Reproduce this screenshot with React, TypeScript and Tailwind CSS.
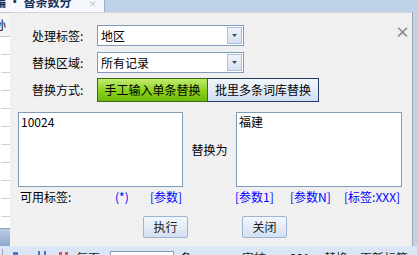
const font = "font-['Noto_Sans_CJK_SC','Noto_Sans',sans-serif]";

function Combo({ value }: { value: string }) {
  return (
    <div className="flex h-[21px] w-[147px] border border-[#7f9db9] bg-white">
      <div className="flex-1 pl-[3px] text-[12px] leading-[19px] text-black">{value}</div>
      <div className="m-px flex w-[15px] items-center justify-center border border-[#aabfe0] bg-linear-to-b from-[#eef3fb] to-[#d5e1f2]">
        <svg width="5" height="3" viewBox="0 0 5 3">
          <path d="M0 0h5L2.5 3z" fill="#4a4a4a" />
        </svg>
      </div>
    </div>
  );
}

function Btn({ label }: { label: string }) {
  return (
    <div className="flex h-[22px] w-[45px] items-center justify-center rounded-[2px] border border-[#9fb4d2] bg-linear-to-b from-[#f3f7fc] to-[#d4e0f1] text-[12px] text-[#1b1b1b]">
      {label}
    </div>
  );
}

export default function App() {
  const rows = Array.from({ length: 10 });
  return (
    <div className={`flex h-[255px] w-[417px] flex-col overflow-hidden bg-[#c0d2ea] ${font}`}>
      {/* 背景标签栏 */}
      <div className="flex h-[12px] shrink-0">
        <div className="relative flex w-[105px] items-end overflow-hidden border-r border-[#9fb3d0] bg-[#f5f8fd]">
          <span className="mb-[4px] ml-[-6px] whitespace-nowrap text-[12px] font-bold leading-[12px] text-[#1c2f55]">
            编 · 替条数分
          </span>
          <span className="absolute left-[88px] top-[-3px] text-[9px] text-[#b5b5b5]">×</span>
        </div>
        <div className="flex-1" />
      </div>

      <div className="flex h-[234px] shrink-0">
        {/* 左侧表格 */}
        <div className="flex w-[10px] flex-col overflow-hidden border-t border-[#c4c4c4] bg-white">
          <div className="h-[24px] shrink-0 overflow-hidden border-b border-[#c9c9c9] bg-[#f4f4f4] pt-[5px]">
            <span className="ml-[-6px] block whitespace-nowrap text-[12px] leading-[14px] text-black">孙</span>
          </div>
          {rows.map((_, i) => (
            <div key={i} className="ml-[1px] h-[18px] shrink-0 border-b border-[#cfcfcf]" />
          ))}
          <div className="h-[11px] shrink-0" />
          <div className="flex-1 border-t border-[#8aa2c4] bg-linear-to-b from-[#b9cbe4] to-[#8fa9cd]" />
        </div>

        {/* 对话框 */}
        <div className="flex w-[403px] flex-col border-r border-t border-r-[#a3a3a3] border-t-[#d4d4d4] bg-[#f0f0f0] text-[12px] text-black">
          <div className="mt-[12px] flex items-start">
            <div className="ml-[22px] w-[65px] leading-[21px]">处理标签:</div>
            <Combo value="地区" />
            <div className="ml-[151px] mt-[1px] text-[15px] font-bold leading-[12px] text-[#8c8c8c]">×</div>
          </div>
          <div className="mt-[6px] flex">
            <div className="ml-[22px] w-[65px] leading-[21px]">替换区域:</div>
            <Combo value="所有记录" />
          </div>
          <div className="mt-[5px] flex">
            <div className="ml-[22px] w-[65px] leading-[24px]">替换方式:</div>
            <div className="flex h-[24px] w-[111px] items-center justify-center border border-[#3b6b12] bg-linear-to-b from-[#c2ec6c] via-[#8fd41c] to-[#6cb80b] text-black">
              手工输入单条替换
            </div>
            <div className="flex h-[24px] w-[111px] items-center justify-center border border-l-0 border-[#213d63] bg-linear-to-b from-[#f2f6fc] to-[#d2dff1] text-black">
              批里多条词库替换
            </div>
          </div>

          <div className="mt-[10px] flex items-center">
            <div className="ml-[8px] h-[75px] w-[165px] border border-[#7f9db9] bg-white pl-[2px] pt-[1px] leading-[16px]">
              10024
            </div>
            <div className="w-[53px] text-center">替换为</div>
            <div className="h-[75px] w-[166px] border border-[#7f9db9] bg-white pl-[2px] pt-[1px] leading-[16px]">
              福建
            </div>
          </div>

          <div className="mt-[2px] flex leading-[16px]">
            <div className="ml-[10px] w-[95px]">可用标签:</div>
            <div className="w-[35px] text-[#0000ff]">(*)</div>
            <div className="w-[85px] text-[#0000ff]">[参数]</div>
            <div className="w-[55px] text-[#0000ff]">[参数1]</div>
            <div className="w-[54px] text-[#0000ff]">[参数N]</div>
            <div className="text-[#0000ff]">[标签:XXX]</div>
          </div>

          <div className="ml-[133px] mt-[11px] flex gap-[54px]">
            <Btn label="执行" />
            <Btn label="关闭" />
          </div>
        </div>
        <div className="flex-1" />
      </div>

      {/* 底部工具栏 */}
      <div className="flex h-[9px] shrink-0 items-start overflow-hidden bg-[#dae6f5] text-[12px] leading-[14px] text-[#1e1e1e]">
        <div className="ml-[2px] mt-[3px] h-[6px] w-px bg-[#9aa7b8]" />
        <div className="ml-[10px] mt-[6px] h-[3px] w-[5px] bg-[#4a78c0]" />
        <div className="ml-[20px] mt-[5px] h-[4px] w-[2px] bg-[#4a78c0]" />
        <div className="ml-[4px] mt-[5px] h-[4px] w-[2px] bg-[#4a78c0]" />
        <div className="ml-[13px] mt-[6px] h-[3px] w-[3px] bg-[#e05050]" />
        <div className="ml-[3px] mt-[6px] h-[3px] w-[3px] bg-[#e05050]" />
        <div className="ml-[8px] mt-[5px]">每页</div>
        <div className="ml-[10px] mt-[5px] h-[10px] w-[64px] border border-[#7f9db9] bg-white" />
        <div className="ml-[6px] mt-[5px]">条</div>
        <div className="ml-[50px] mt-[5px]">审核</div>
        <div className="ml-[24px] mt-[5px]">221</div>
        <div className="ml-[14px] mt-[5px]">替换</div>
        <div className="ml-[12px] mt-[5px]">更新标签</div>
      </div>
    </div>
  );
}
